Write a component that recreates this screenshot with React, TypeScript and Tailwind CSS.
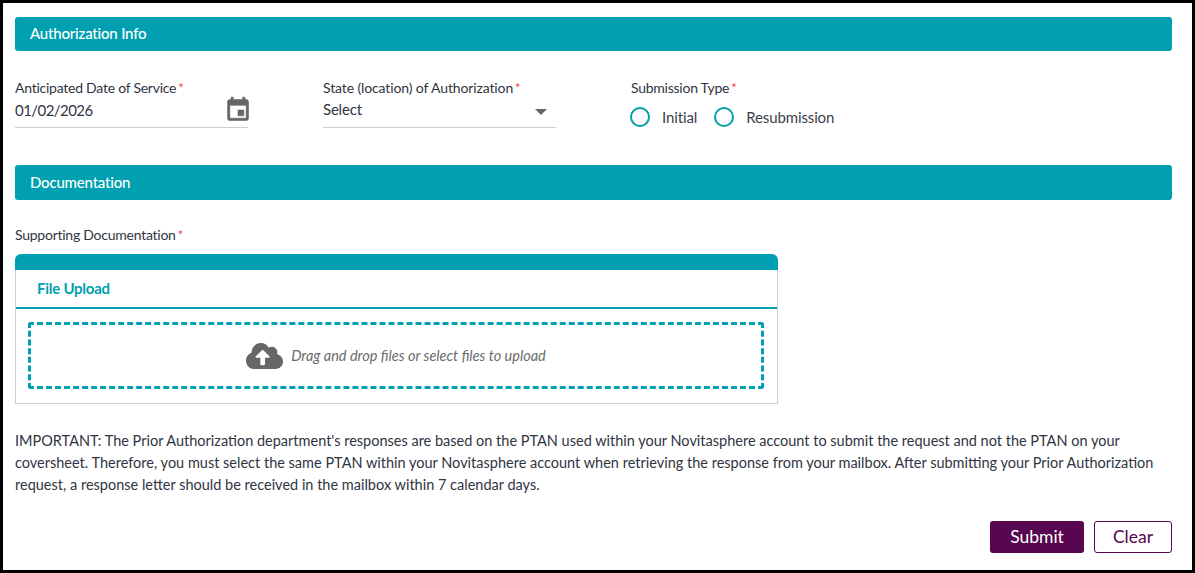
import { FaCloudUploadAlt } from "react-icons/fa";

function Req() {
  return <span className="ml-[2px] text-[13px] leading-none tracking-normal text-[#f44336]">*</span>;
}

function SectionBar({ title, height }: { title: string; height: string }) {
  return (
    <div className={`${height} flex items-center rounded-[3px] bg-[#00a0b0] pb-[1px] pl-[15px] text-[15px] font-medium tracking-[-0.2px] text-white`}>
      {title}
    </div>
  );
}

function Radio({ label }: { label: string }) {
  return (
    <div className="flex items-center gap-[12px]">
      <span className="h-[20px] w-[20px] rounded-full border-[2px] border-[#00a0a8]" />
      <span className="text-[15px] tracking-[-0.12px] text-[#3a3f4b]">{label}</span>
    </div>
  );
}

export default function App() {
  return (
    <div className="box-border h-[573px] w-[1195px] border-[3px] border-black bg-white font-['Lato','Open_Sans',sans-serif] text-[#2f3542]">
      <div className="px-[12px] pt-[14px] pr-[20px]">
        <SectionBar title="Authorization Info" height="h-[34px]" />

        {/* Authorization fields */}
        <div className="mt-[27px] flex h-[87px] items-start">
          <div className="w-[308px]">
            <div className="text-[14px] leading-[20px] tracking-[-0.25px]">Anticipated Date of Service<Req /></div>
            <div className="flex h-[30px] w-[233px] items-center justify-between border-b border-[#cfcfcf] pb-[4px]">
              <span className="text-[15px] tracking-[-0.55px]">01/02/2026</span>
              <svg viewBox="0 0 24 24" className="mr-[-4px] mt-[-1px] h-[28px] w-[28px] fill-[#666] stroke-[#666] stroke-[0.5]">
                <path d="M17 12h-5v5h5v-5zM16 1v2H8V1H6v2H5c-1.11 0-1.99.9-1.99 2L3 19c0 1.1.89 2 2 2h14c1.1 0 2-.9 2-2V5c0-1.1-.9-2-2-2h-1V1h-2zm3 18H5V8h14v11z" />
              </svg>
            </div>
          </div>
          <div className="w-[308px]">
            <div className="text-[14px] leading-[20px] tracking-[-0.12px]">State (location) of Authorization<Req /></div>
            <div className="flex h-[30px] w-[233px] items-center justify-between border-b border-[#cfcfcf] pb-[6px]">
              <span className="text-[15px] tracking-[-0.2px]">Select</span>
              <span className="mr-[9px] mt-[4px] h-0 w-0 border-x-[6px] border-t-[6px] border-x-transparent border-t-[#666]" />
            </div>
          </div>
          <div className="ml-[-1px]">
            <div className="pl-[1px] text-[14px] leading-[20px] tracking-[-0.25px]">Submission Type<Req /></div>
            <div className="mt-[8px] flex items-center gap-[17px]">
              <Radio label="Initial" />
              <Radio label="Resubmission" />
            </div>
          </div>
        </div>

        <SectionBar title="Documentation" height="h-[35px]" />

        <div className="mt-[25px] text-[14px] leading-[20px] tracking-[-0.25px]">Supporting Documentation<Req /></div>

        {/* File upload card */}
        <div className="mt-[9px] w-[763px] overflow-hidden rounded-t-[6px]">
          <div className="h-[16px] bg-[#00a0b0]" />
          <div className="h-[134px] border-x border-b border-[#cfcfcf]">
            <div className="flex h-[39px] items-center border-b-[2px] border-[#00a0b0] pl-[21px] text-[15px] font-bold tracking-[-0.25px] text-[#00a0b0]">
              File Upload
            </div>
            <div className="ml-[12px] mr-[13px] mt-[13px] flex h-[67px] items-center justify-center gap-[8px] rounded-[3px] border-[3px] border-dashed border-[#00a0b0]">
              <FaCloudUploadAlt className="h-[30px] w-[37px] text-[#666]" />
              <span className="mt-[1px] text-[14.5px] italic text-[#6b6b6b]">Drag and drop files or select files to upload</span>
            </div>
          </div>
        </div>

        <p className="mt-[26px] text-[14.5px] leading-[22px]">
          IMPORTANT: The Prior Authorization department's responses are based on the PTAN used within your Novitasphere account to submit the request and not the PTAN on your coversheet. Therefore, you must select the same PTAN within your Novitasphere account when retrieving the response from your mailbox. After submitting your Prior Authorization request, a response letter should be received in the mailbox within 7 calendar days.
        </p>

        <div className="mt-[25px] flex justify-end gap-[10px]">
          <button className="h-[32px] w-[94px] rounded-[3px] bg-[#57064f] text-[17.5px] text-white">Submit</button>
          <button className="h-[32px] w-[78px] rounded-[3px] border border-[#57064f] bg-white text-[17.5px] text-[#57064f]">Clear</button>
        </div>
      </div>
    </div>
  );
}
